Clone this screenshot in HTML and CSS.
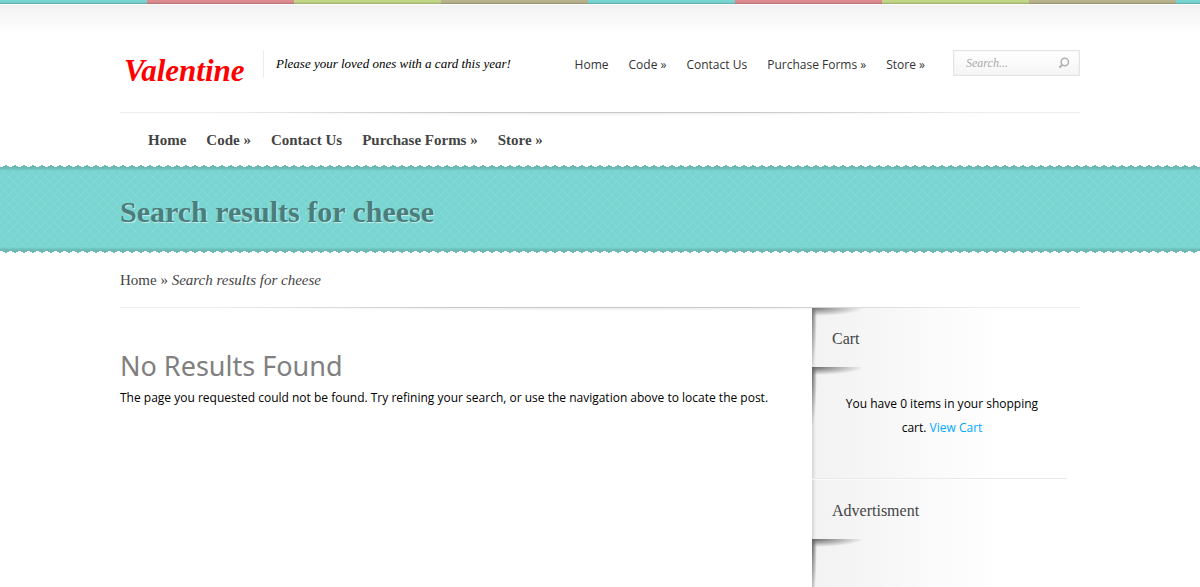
FILE: index.html
```html
<!DOCTYPE html>
<html lang="en">
<head>
<meta charset="utf-8">
<title>Search results for cheese | Valentine</title>
<link rel="stylesheet" href="styles.css">
</head>
<body>
<div class="stripes"></div>
<div class="page-top">
  <header class="container header">
    <a class="logo" href="#">Valentine</a>
    <p class="slogan">Please your loved ones with a card this year!</p>
    <nav class="top-nav" aria-label="Pages">
      <a href="#">Home</a>
      <a href="#">Code »</a>
      <a href="#">Contact Us</a>
      <a href="#">Purchase Forms »</a>
      <a href="#">Store »</a>
    </nav>
    <form class="search" role="search">
      <input class="search-input" type="text" placeholder="Search..." aria-label="Search">
      <button class="search-button" type="submit" aria-label="Search">
        <svg width="12" height="12" viewBox="0 0 12 12" fill="none" stroke="#b0b0b0"><circle cx="6.8" cy="5" r="3.7" stroke-width="1.5"/><path d="M4.2 7.6L1.4 10.6" stroke-width="2"/></svg>
      </button>
    </form>
  </header>
  <div class="container"><div class="rule"></div></div>
  <nav class="container main-nav" aria-label="Categories">
    <a href="#">Home</a>
    <a href="#">Code »</a>
    <a href="#">Contact Us</a>
    <a href="#">Purchase Forms »</a>
    <a href="#">Store »</a>
  </nav>
</div>
<div class="band">
  <svg class="edge" height="3" aria-hidden="true"><defs><pattern id="edge-top" width="9" height="3" patternUnits="userSpaceOnUse"><path d="M0 3V2H3V1H5V0H7V1H9V3Z" fill="#6bb9b4" shape-rendering="crispEdges"/></pattern></defs><rect width="100%" height="3" fill="url(#edge-top)"/></svg>
  <div class="band-body">
    <svg class="lattice" aria-hidden="true"><defs><pattern id="lattice" width="9" height="9" patternUnits="userSpaceOnUse"><path d="M-1 -1L10 10M-1 10L10 -1" stroke="#86d9d5" stroke-width="1"/></pattern></defs><rect width="100%" height="100%" fill="url(#lattice)"/></svg>
    <div class="container"><h1 class="band-title">Search results for cheese</h1></div>
  </div>
  <svg class="edge" height="3" aria-hidden="true"><defs><pattern id="edge-bottom" width="9" height="3" patternUnits="userSpaceOnUse"><path d="M0 0H9V2H7V3H5V2H3V1H0Z" fill="#6bb9b4" shape-rendering="crispEdges"/></pattern></defs><rect width="100%" height="3" fill="url(#edge-bottom)"/></svg>
</div>
<div class="container page-body">
  <div class="breadcrumbs"><a href="#">Home</a> » <em>Search results for cheese</em></div>
  <div class="rule"></div>
  <div class="columns">
    <main class="content">
      <h2 class="content-title">No Results Found</h2>
      <p>The page you requested could not be found. Try refining your search, or use the navigation above to locate the post.</p>
    </main>
    <aside class="sidebar">
      <section class="widget">
        <h3 class="widget-title">Cart</h3>
        <div class="widget-body">
          <p class="cart-text">You have 0 items in your shopping cart. <a href="#">View Cart</a></p>
        </div>
      </section>
      <div class="divider"></div>
      <section class="widget widget-last">
        <h3 class="widget-title">Advertisment</h3>
        <div class="widget-body"></div>
      </section>
    </aside>
  </div>
</div>
</body>
</html>
```
FILE: styles.css
```css
* { box-sizing: border-box; }
body {
  min-height: 100vh;
  margin: 0;
  display: flex;
  flex-direction: column;
  background: #fff;
  color: #000;
  font: 12px/24px "Open Sans", "Noto Sans", sans-serif;
}
a { color: inherit; text-decoration: none; }
h1, h2, h3, p { margin: 0; font-weight: normal; }
.container { width: 80%; margin: 0 auto; }
.page-body { flex: 1; display: flex; flex-direction: column; }

.stripes {
  height: 4px;
  flex: none;
  background:
    linear-gradient(transparent 50%, rgba(0, 0, 0, .2)),
    repeating-linear-gradient(90deg, #78d5d1 0 147px, #de8b8f 147px 294px, #c0d585 294px 441px, #b8b28c 441px 588px);
}
.page-top { background: linear-gradient(#fff 1px, #f2f2f2 1px, #fff 30px); }
.header { display: flex; align-items: flex-start; height: 108px; padding-top: 46px; }
.logo {
  width: 144px;
  height: 28px;
  padding-left: 4px;
  border-right: 1px solid #ececec;
  color: #f00;
  font: italic bold 31px/42px "Brush Script MT", "Liberation Serif", serif;
}
.slogan { padding-left: 12px; font: italic 13px/28px "Liberation Serif", serif; white-space: nowrap; }
.top-nav { display: flex; gap: 20px; margin-left: auto; color: #333; line-height: 30px; white-space: nowrap; }
.search {
  display: flex;
  align-items: center;
  width: 127px;
  height: 26px;
  margin-left: 28px;
  padding: 0 9px 0 12px;
  border: 1px solid #e4e4e4;
  background: linear-gradient(#fff, #f5f5f5);
  box-shadow: inset 0 0 2px #e6e6e6;
}
.search-input { flex: 1; min-width: 0; padding: 0; border: 0; outline: 0; background: none; font: italic 12px/22px "Liberation Serif", serif; }
.search-input::placeholder { color: #a9a9a9; opacity: 1; }
.search-button { display: flex; padding: 0; border: 0; background: none; }

.rule {
  flex: none;
  height: 4px;
  background:
    linear-gradient(90deg, #ededed 10%, #c8c8c8 35%, #c8c8c8 65%, #ededed 90%) 0 0 / 100% 1px no-repeat,
    radial-gradient(ellipse 42% 100% at 50% 0, #e6e6e6, rgba(255, 255, 255, 0));
}
.main-nav { display: flex; gap: 20px; height: 49px; padding: 12px 0 0 28px; color: #444; font: bold 15px/24px "Liberation Serif", serif; white-space: nowrap; }

.band { flex: none; }
.edge { display: block; width: 100%; }
.band-body {
  display: grid;
  height: 82px;
  background: #78d5d1;
}
.band-body > * { grid-area: 1 / 1; }
.lattice { width: 100%; height: 82px; }
.band-body::after {
  content: "";
  grid-area: 1 / 1;
  background: linear-gradient(#6bb9b4, rgba(107, 185, 180, 0) 3px, rgba(107, 185, 180, 0) 79px, #6bb9b4);
}
.band-title { padding-top: 22px; color: #4b7d7b; font: bold 30px/44px "Liberation Serif", serif; text-shadow: 1px 1px 1px rgba(255, 255, 255, .6); }

.breadcrumbs { height: 54px; padding-top: 15px; color: #444; font: 15px/24px "Liberation Serif", serif; }
.columns { display: flex; flex: 1; margin-top: -3px; }
.content { flex: 1; padding-top: 38px; }
.content-title { color: #808080; font: 27px/40px "Noto Sans", "Open Sans", sans-serif; }
.sidebar {
  display: flex;
  flex-direction: column;
  width: 268px;
  background:
    linear-gradient(90deg, rgba(0, 0, 0, .12), transparent 4px),
    linear-gradient(90deg, #f2f2f2, #fff 190px);
}
.widget { background: radial-gradient(ellipse 52px 8px at 0 0, #777, transparent), radial-gradient(ellipse 5px 60px at 0 0, #777, transparent); }
.widget-last { display: flex; flex: 1; flex-direction: column; background: none; }
.divider { height: 2px; background: linear-gradient(#e9e9e9 50%, rgba(255, 255, 255, .6) 50%) 0 0 / 255px 2px no-repeat; }
.widget-title { height: 59px; padding: 19px 20px 0; color: #444; font: 16px/24px "Liberation Serif", serif; }
.widget-body {
  padding: 25px 28px 38px;
  background: radial-gradient(ellipse 52px 8px at 0 0, #666, transparent), radial-gradient(ellipse 5px 60px at 0 0, #666, transparent);
}
.widget-last .widget-body { flex: 1; padding: 0; }
.cart-text { width: 204px; text-align: center; }
.cart-text a { color: #00a8ff; }
```
